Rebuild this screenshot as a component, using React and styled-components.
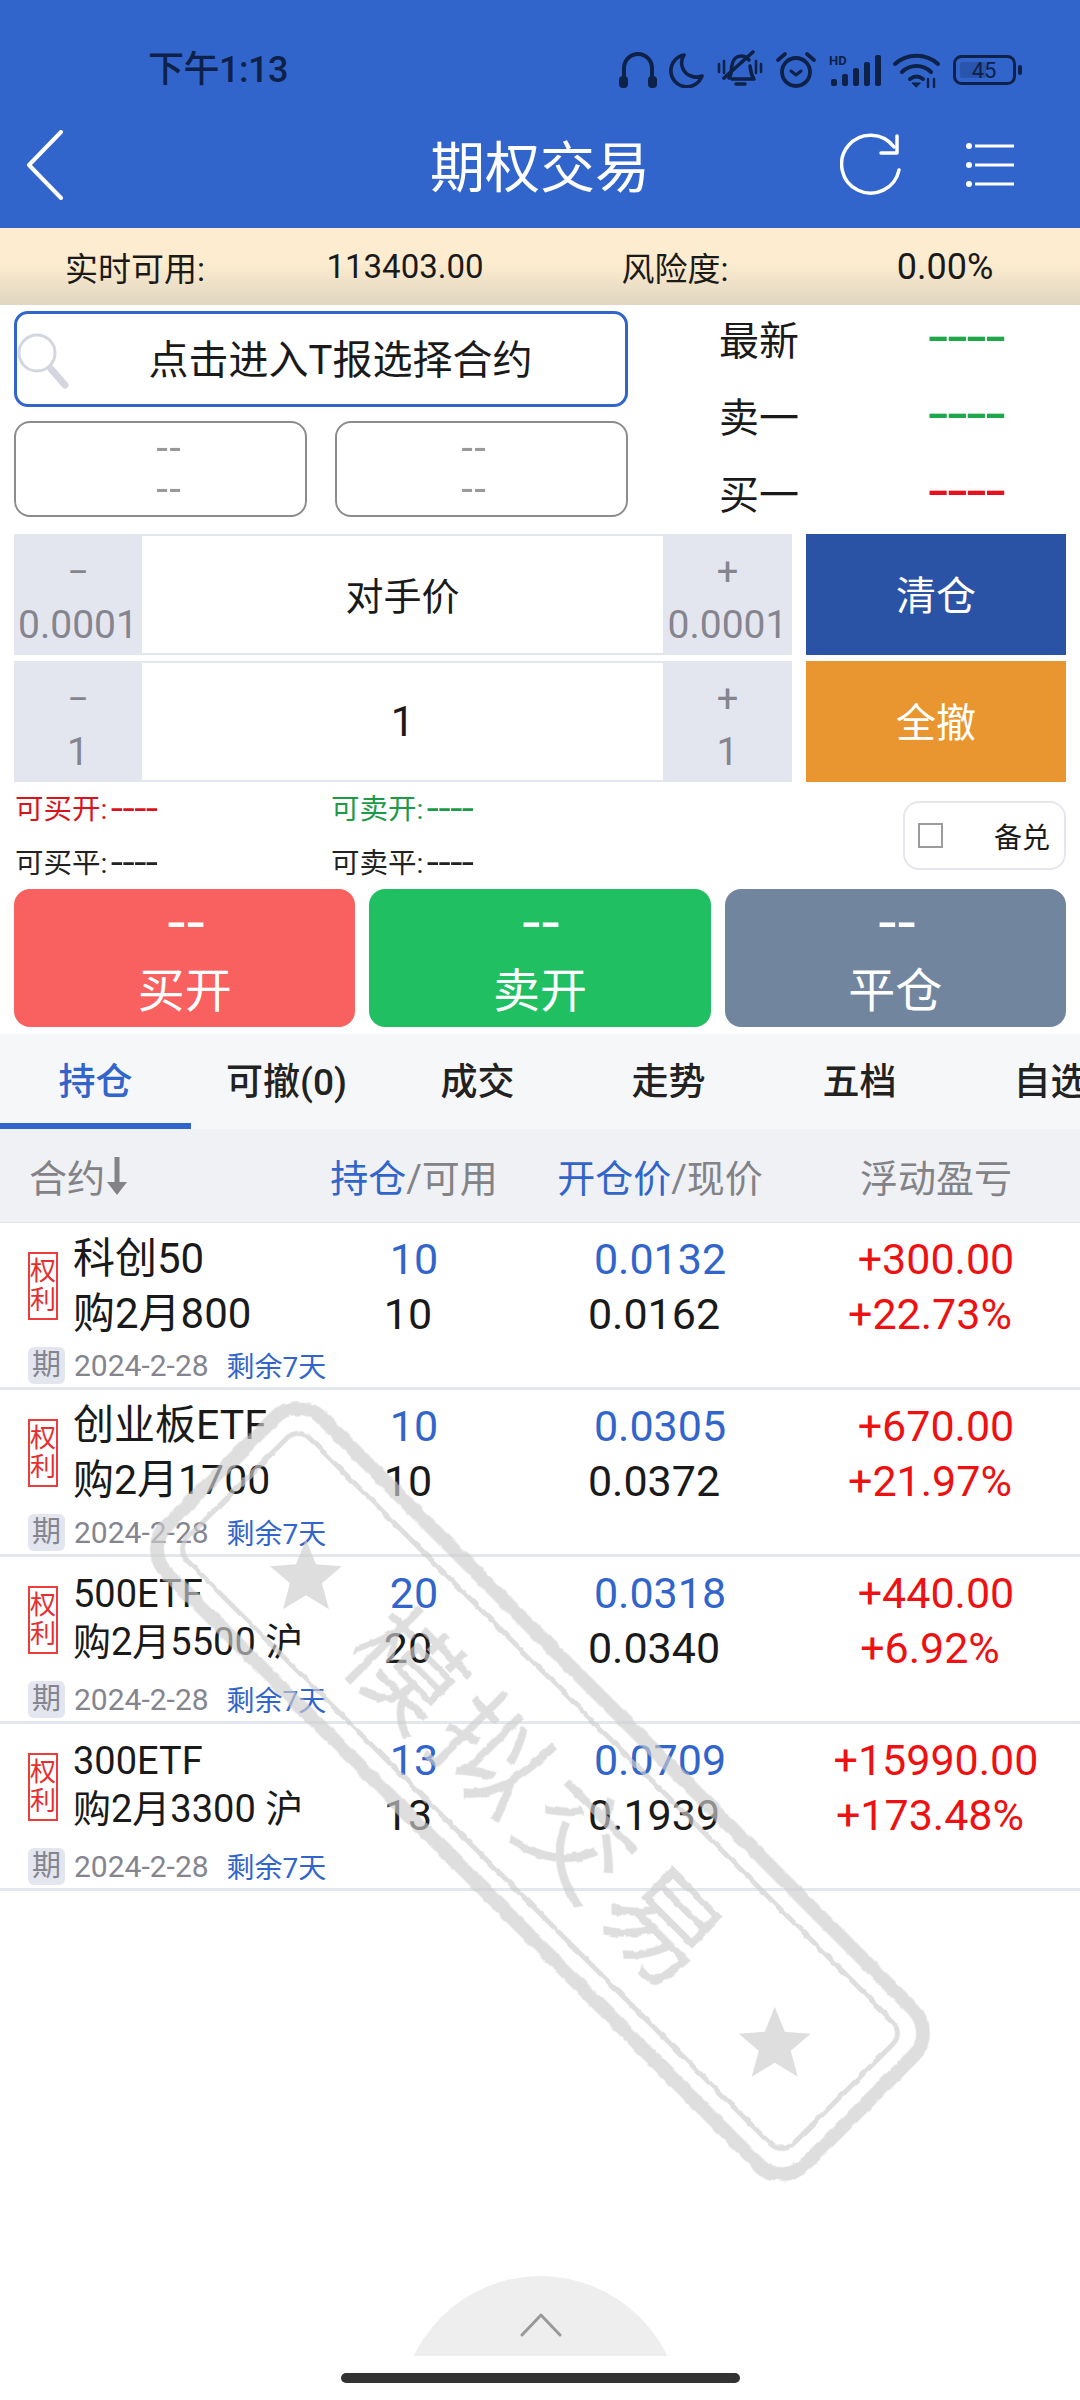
import React from "react";
import styled, { createGlobalStyle } from "styled-components";

const Global = createGlobalStyle`
  html, body { margin: 0; padding: 0; background: #fff; }
  * { box-sizing: border-box; }
  body { font-family: Roboto, "Noto Sans CJK SC", sans-serif; }
`;

const Page = styled.div`
  position: relative;
  width: 1080px;
  height: 2400px;
  display: flex;
  flex-direction: column;
  overflow: hidden;
  background: #fff;
  color: #1a1a1a;
`;

const TopBar = styled.header`
  height: 228px;
  flex: none;
  background: #3265cb;
  display: flex;
  flex-direction: column;
`;
const StatusBar = styled.div`
  height: 110px;
  padding: 50px 57px 0 148px;
  display: flex;
  justify-content: space-between;
  align-items: flex-start;
  color: #0d2149;
`;
const Clock = styled.span`
  font-size: 36px;
  line-height: 40px;
  font-weight: 500;
  letter-spacing: -0.5px;
`;
const StatusIcons = styled.div`
  display: flex;
  align-items: center;
  gap: 12px;
  height: 40px;
  svg { display: block; flex: none; }
`;
const NavBar = styled.div`
  flex: 1;
  position: relative;
  display: flex;
  align-items: center;
  justify-content: space-between;
  padding: 0 66px 8px 26px;
  color: #fff;
`;
const Title = styled.h1`
  position: absolute;
  left: 0;
  right: 0;
  top: 23px;
  margin: 0;
  text-align: center;
  font-size: 55px;
  line-height: 70px;
  font-weight: 400;
`;
const NavRight = styled.div`
  display: flex;
  align-items: center;
  gap: 62px;
`;

const InfoBar = styled.div`
  height: 77px;
  flex: none;
  display: grid;
  grid-template-columns: repeat(4, 1fr);
  align-items: center;
  text-align: center;
  font-size: 33px;
  background: linear-gradient(#fdeccf 0%, #fdeccf 45%, #e0d6c1 100%);
`;
const Percent = styled.span`
  font-size: 36px;
`;

const TradeArea = styled.section`
  padding: 6px 14px 0;
  flex: none;
`;
const TopGrid = styled.div`
  display: flex;
  height: 206px;
`;
const PickColumn = styled.div`
  width: 614px;
  display: flex;
  flex-direction: column;
  gap: 14px;
`;
const SearchBox = styled.div`
  position: relative;
  height: 96px;
  border: 3px solid #3265cb;
  border-radius: 14px;
  display: flex;
  align-items: center;
  justify-content: center;
  padding: 0 0 4px 39px;
  font-size: 40px;
  svg { position: absolute; left: -1px; top: 18px; }
`;
const SubRow = styled.div`
  display: flex;
  justify-content: space-between;
`;
const SubBox = styled.div`
  flex: none;
  width: 293px;
  height: 96px;
  border: 2px solid #8c8c8c;
  border-radius: 16px;
  display: flex;
  flex-direction: column;
  align-items: center;
  justify-content: center;
  gap: 5px;
  line-height: 36px;
  padding-left: ${(p) => p.$pl || 0}px;
  padding-right: ${(p) => p.$pr || 0}px;
`;
const QuoteColumn = styled.div`
  flex: 1;
  display: flex;
  flex-direction: column;
  gap: 23px;
  padding: 0 0 0 91px;
`;
const QuoteRow = styled.div`
  height: 54px;
  display: flex;
  align-items: center;
  font-size: 40px;
`;
const QuoteLabel = styled.span`
  width: 207px;
`;
const DashText = styled.span`
  display: inline-block;
  font-family: Roboto, sans-serif;
  font-size: ${(p) => p.$size}px;
  font-weight: ${(p) => p.$w || 700};
  letter-spacing: ${(p) => p.$ls || 0}px;
  color: ${(p) => p.$c || "inherit"};
  transform: scaleX(${(p) => p.$sx});
  transform-origin: ${(p) => (p.$center ? "center" : "left")};
`;

const StepperGrid = styled.div`
  display: grid;
  grid-template-columns: 778px 260px;
  column-gap: 14px;
  row-gap: 6px;
  margin-top: 17px;
`;
const Stepper = styled.div`
  height: 121px;
  display: grid;
  grid-template-columns: 128px 1fr 129px;
  border-top: 2px solid #e4e6ef;
  border-bottom: 2px solid #e4e6ef;
`;
const StepCell = styled.div`
  background: #e4e6ef;
  color: #85858f;
  display: flex;
  flex-direction: column;
  align-items: center;
  padding-top: 14px;
  font-size: 39px;
  line-height: 46px;
  > b { font-weight: 400; font-size: 38px; line-height: 44px; height: 52px; }
`;
const StepValue = styled.div`
  display: flex;
  align-items: center;
  justify-content: center;
  padding-bottom: ${(p) => p.$pb || 0}px;
  font-size: ${(p) => p.$size}px;
`;
const SideButton = styled.button`
  border: 0;
  height: 121px;
  padding: 0 0 3px;
  background: ${(p) => p.$bg};
  color: #fff;
  font: inherit;
  font-size: 40px;
`;

const AvailRow = styled.div`
  display: flex;
  justify-content: space-between;
  height: 107px;
`;
const AvailGrid = styled.div`
  display: grid;
  grid-template-columns: 316px 316px;
  grid-auto-rows: 54px;
  font-size: 28.5px;
  align-items: center;
  margin-top: -3px;
  padding-left: 1px;
  height: 108px;
`;
const Avail = styled.span`
  color: ${(p) => p.$c};
  white-space: nowrap;
`;
const AvailLabel = styled.span`
  margin-right: 3px;
`;
const CoverBox = styled.div`
  margin-top: 19px;
  width: 163px;
  height: 69px;
  border: 2px solid #e6e7ee;
  border-radius: 16px;
  display: flex;
  align-items: center;
  padding-left: 13px;
  font-size: 28px;
`;
const CheckMark = styled.span`
  width: 25px;
  height: 25px;
  border: 2px solid #9c9c9c;
  margin-right: 51px;
`;
const Actions = styled.div`
  display: grid;
  grid-template-columns: repeat(3, 1fr);
  column-gap: 14px;
`;
const Action = styled.button`
  height: 138px;
  border: 0;
  border-radius: 16px;
  padding: 10px 0 0;
  background: ${(p) => p.$bg};
  color: #fff;
  font: inherit;
  display: flex;
  flex-direction: column;
  align-items: center;
  > b { font-weight: 400; line-height: 50px; height: 60px; }
  > span { font-size: 47px; line-height: 64px; }
`;

const Tabs = styled.nav`
  margin-top: 7px;
  height: 95px;
  flex: none;
  display: flex;
  background: #f6f7f9;
  overflow: hidden;
`;
const Tab = styled.div`
  flex: none;
  width: 191px;
  display: flex;
  align-items: center;
  justify-content: center;
  font-size: 37px;
  font-weight: 500;
  color: ${(p) => (p.$on ? "#3265cb" : "#222")};
  border-bottom: 6px solid ${(p) => (p.$on ? "#3265cb" : "transparent")};
`;
const tableColumns = "280px 268px 224px 308px";
const TableHead = styled.div`
  height: 94px;
  flex: none;
  background: #eff1f4;
  border-bottom: 1px solid #e3e5ec;
  display: grid;
  grid-template-columns: ${tableColumns};
  align-items: center;
  font-size: 38px;
  color: #828287;
  text-align: center;
  white-space: nowrap;
  em { font-style: normal; color: #3265cb; }
`;
const HeadFirst = styled.span`
  display: flex;
  align-items: center;
  padding-left: 29px;
`;
const HeadPnl = styled.span`
  padding-left: 20px;
`;

const Row = styled.div`
  height: 167px;
  flex: none;
  border-bottom: 3px solid #e5e7ee;
  display: grid;
  grid-template-columns: ${tableColumns};
  position: relative;
`;
const NameCell = styled.div`
  display: grid;
  grid-template-columns: 45px minmax(0, 1fr);
  grid-template-rows: 1fr 44px;
  padding-left: 28px;
`;
const RightTag = styled.span`
  margin-top: 29px;
  width: 30px;
  height: 68px;
  border: 2px solid #ee3b3b;
  color: #e62e2e;
  font-size: 26px;
  line-height: 29px;
  text-align: center;
  padding-top: 3px;
`;
const Names = styled.div`
  font-size: ${(p) => p.$size}px;
  line-height: ${(p) => (p.$size < 40 ? 48 : 55)}px;
  padding-top: ${(p) => (p.$size < 40 ? 13 : 8)}px;
  white-space: nowrap;
`;
const Expiry = styled.div`
  grid-column: 1 / 3;
  display: flex;
  align-items: center;
  font-size: 30px;
  color: #85858f;
  white-space: nowrap;
`;
const ExpiryBadge = styled.span`
  flex: none;
  width: 37px;
  height: 37px;
  background: #e4e6ef;
  border-radius: 6px;
  text-align: center;
  font-size: 29px;
  line-height: 36px;
  margin-right: 9px;
`;
const Left = styled.span`
  color: #3265cb;
  font-size: 28px;
  margin-left: 18px;
`;
const Num = styled.div`
  padding-top: 9px;
  padding-left: ${(p) => p.$pl || 0}px;
  display: flex;
  flex-direction: column;
  align-items: center;
  font-size: 43px;
  line-height: 55px;
  color: ${(p) => p.$c || "#1a1a1a"};
  > span:first-child { color: ${(p) => p.$top || "inherit"}; }
  > span:last-child { margin-right: 12px; }
`;

const Bottom = styled.div`
  margin-top: auto;
  height: 124px;
  flex: none;
  display: flex;
  flex-direction: column;
  align-items: center;
`;
const HandleClip = styled.div`
  position: relative;
  width: 253px;
  height: 80px;
  overflow: hidden;
  svg { position: absolute; left: 106px; top: 36px; }
  &::before {
    content: "";
    position: absolute;
    left: -14px;
    top: 0;
    width: 281px;
    height: 281px;
    border-radius: 50%;
    background: #eeeeee;
  }
`;
const HomeBar = styled.div`
  margin-top: 17px;
  width: 399px;
  height: 10px;
  border-radius: 5px;
  background: #333;
`;
const Watermark = styled.svg`
  position: absolute;
  left: 0;
  top: 0;
  pointer-events: none;
`;

const rows = [
  [42, "科创50", "购2月800", "10", "10", "0.0132", "0.0162", "+300.00", "+22.73%"],
  [41, "创业板ETF", "购2月1700", "10", "10", "0.0305", "0.0372", "+670.00", "+21.97%"],
  [38, "500ETF", "购2月5500 沪", "20", "20", "0.0318", "0.0340", "+440.00", "+6.92%"],
  [38, "300ETF", "购2月3300 沪", "13", "13", "0.0709", "0.1939", "+15990.00", "+173.48%"],
];
const tabs = ["持仓", "可撤(0)", "成交", "走势", "五档", "自选"];
const star = "M0 -36 L10 -11 L36 -9 L16 8 L23 34 L0 20 L-23 34 L-16 8 L-36 -9 L-10 -11 Z";

const Stroke = { fill: "none", stroke: "currentColor", strokeLinecap: "round", strokeLinejoin: "round" };

const QuoteDash = ({ c }) => <DashText $size={38} $sx={1.64} $ls={-3.3} $c={c}>----</DashText>;
const AvailDash = () => <DashText $size={29} $sx={1.4} $w={500} $ls={-1.5}>----</DashText>;
const SubDash = () => <DashText $size={28} $sx={1.3} $ls={-1} $c="#999" $center>--</DashText>;
const ActionDash = () => <DashText $size={40} $sx={1.4} $ls={-2} $center>--</DashText>;

export default function App() {
  return (
    <Page>
      <Global />
      <TopBar>
        <StatusBar>
          <Clock>下午1:13</Clock>
          <StatusIcons>
            <svg width="38" height="38" viewBox="0 0 38 38" {...Stroke} strokeWidth="4">
              <path d="M5 30V17a14 14 0 0 1 28 0v13" />
              <rect x="2" y="27" width="5" height="8" rx="2" fill="currentColor" />
              <rect x="31" y="27" width="5" height="8" rx="2" fill="currentColor" />
            </svg>
            <svg width="36" height="36" viewBox="0 0 36 36" {...Stroke} strokeWidth="3.6">
              <path d="M15 3A16 16 0 1 0 33 24A15 15 0 0 1 22 24A14 14 0 0 1 15 3Z" />
            </svg>
            <svg width="46" height="40" viewBox="0 0 46 40" {...Stroke} strokeWidth="3.6">
              <path d="M12 28c3-4 2-8 3-13c1-6 5-9 9-9c3 0 6 1 8 4M33 16c1 5 1 9 4 13l-22 0" />
              <path d="M19 34h9" />
              <path d="M7 28L36 2" />
              <path d="M2 14v8M7 11v12M39 11v12M44 14v8" strokeWidth="2.6" />
            </svg>
            <svg width="42" height="38" viewBox="0 0 42 38" {...Stroke} strokeWidth="3.8">
              <circle cx="21" cy="21" r="14" />
              <path d="M3 9L10 3M39 9L32 3" />
              <path d="M16 20l5 4l5-4" strokeWidth="3" />
            </svg>
            <svg width="52" height="34" viewBox="0 0 52 34">
              <text x="0" y="12" fontSize="13" fontWeight="700" fill="currentColor" fontFamily="Roboto, sans-serif">HD</text>
              <g fill="currentColor">
                <rect x="2" y="26" width="6" height="7" rx="2" />
                <rect x="13" y="21" width="6" height="12" rx="2" />
                <rect x="24" y="15" width="6" height="18" rx="2" />
                <rect x="35" y="9" width="6" height="24" rx="2" />
                <rect x="46" y="2" width="6" height="31" rx="2" />
              </g>
            </svg>
            <svg width="48" height="36" viewBox="0 0 48 36" {...Stroke} strokeWidth="4">
              <path d="M2 12C14 1 33 1 45 12" />
              <path d="M9 20C17 12 30 12 38 20" />
              <path d="M17 27c4-3 9-3 13 0" />
              <path d="M23 35l-4-4h8z" fill="currentColor" strokeWidth="1" />
              <path d="M35 27v8M41 27v8" strokeWidth="2.4" />
            </svg>
            <svg width="70" height="30" viewBox="0 0 70 30">
              <rect x="1.5" y="1.5" width="60" height="27" rx="7" fill="none" stroke="currentColor" strokeWidth="3" />
              <rect x="7" y="7" width="26" height="16" rx="2" fill="#2a55ad" />
              <rect x="65" y="10" width="4" height="10" rx="2" fill="currentColor" />
              <text x="31" y="23" fontSize="22" textAnchor="middle" fill="currentColor" fontFamily="Roboto, sans-serif">45</text>
            </svg>
          </StatusIcons>
        </StatusBar>
        <NavBar>
          <svg width="38" height="70" viewBox="0 0 38 70" fill="none" stroke="#fff" strokeWidth="4" strokeLinecap="round" strokeLinejoin="round">
            <path d="M35 2L3 35L35 68" />
          </svg>
          <Title>期权交易</Title>
          <NavRight>
            <svg width="64" height="64" viewBox="0 0 64 64" fill="none" stroke="#fff" strokeWidth="3.5" strokeLinecap="round" strokeLinejoin="round">
              <path d="M59 37A29 29 0 1 1 54 14" />
              <path d="M57 3V20H41" />
            </svg>
            <svg width="48" height="44" viewBox="0 0 48 44" fill="#fff">
              <circle cx="3" cy="3" r="3" /><rect x="9" y="1.5" width="39" height="3" />
              <circle cx="3" cy="22" r="3" /><rect x="9" y="20.5" width="39" height="3" />
              <circle cx="3" cy="41" r="3" /><rect x="9" y="39.5" width="39" height="3" />
            </svg>
          </NavRight>
        </NavBar>
      </TopBar>

      <InfoBar>
        <span>实时可用:</span>
        <span>113403.00</span>
        <span>风险度:</span>
        <Percent>0.00%</Percent>
      </InfoBar>

      <TradeArea>
        <TopGrid>
          <PickColumn>
            <SearchBox>
              <svg width="56" height="58" viewBox="0 0 56 58" fill="none" stroke="#d3d6de">
                <circle cx="21" cy="21" r="18" strokeWidth="3" />
                <path d="M35 37L49 53" strokeWidth="7" strokeLinecap="round" />
              </svg>
              点击进入T报选择合约
            </SearchBox>
            <SubRow>
              <SubBox $pl={16}><SubDash /><SubDash /></SubBox>
              <SubBox $pr={16}><SubDash /><SubDash /></SubBox>
            </SubRow>
          </PickColumn>
          <QuoteColumn>
            <QuoteRow><QuoteLabel>最新</QuoteLabel><QuoteDash c="#1fa84a" /></QuoteRow>
            <QuoteRow><QuoteLabel>卖一</QuoteLabel><QuoteDash c="#1fa84a" /></QuoteRow>
            <QuoteRow><QuoteLabel>买一</QuoteLabel><QuoteDash c="#e8101c" /></QuoteRow>
          </QuoteColumn>
        </TopGrid>

        <StepperGrid>
          <Stepper>
            <StepCell><b>−</b>0.0001</StepCell>
            <StepValue $size={38} $pb={3}>对手价</StepValue>
            <StepCell><b>+</b>0.0001</StepCell>
          </Stepper>
          <SideButton $bg="#2a52a5">清仓</SideButton>
          <Stepper>
            <StepCell><b>−</b>1</StepCell>
            <StepValue $size={42}>1</StepValue>
            <StepCell><b>+</b>1</StepCell>
          </Stepper>
          <SideButton $bg="#e99631">全撤</SideButton>
        </StepperGrid>

        <AvailRow>
          <AvailGrid>
            <Avail $c="#d9141c"><AvailLabel>可买开:</AvailLabel><AvailDash /></Avail>
            <Avail $c="#1c9a45"><AvailLabel>可卖开:</AvailLabel><AvailDash /></Avail>
            <Avail $c="#222"><AvailLabel>可买平:</AvailLabel><AvailDash /></Avail>
            <Avail $c="#222"><AvailLabel>可卖平:</AvailLabel><AvailDash /></Avail>
          </AvailGrid>
          <CoverBox><CheckMark />备兑</CoverBox>
        </AvailRow>

        <Actions>
          <Action $bg="#f96060"><b><ActionDash /></b><span>买开</span></Action>
          <Action $bg="#20c062"><b><ActionDash /></b><span>卖开</span></Action>
          <Action $bg="#71869e"><b><ActionDash /></b><span>平仓</span></Action>
        </Actions>
      </TradeArea>

      <Tabs>
        {tabs.map((t, i) => <Tab key={t} $on={i === 0}>{t}</Tab>)}
      </Tabs>
      <TableHead>
        <HeadFirst>
          合约
          <svg width="24" height="38" viewBox="0 0 24 38" fill="#828287">
            <rect x="9.5" y="0" width="5" height="28" />
            <path d="M2 25H22L12 38Z" />
          </svg>
        </HeadFirst>
        <span><em>持仓</em>/可用</span>
        <span><em>开仓价</em>/现价</span>
        <HeadPnl>浮动盈亏</HeadPnl>
      </TableHead>
      {rows.map((r) => (
        <Row key={r[1]}>
          <NameCell>
            <RightTag>权利</RightTag>
            <Names $size={r[0]}>{r[1]}<br />{r[2]}</Names>
            <Expiry>
              <ExpiryBadge>期</ExpiryBadge>2024-2-28<Left>剩余7天</Left>
            </Expiry>
          </NameCell>
          <Num $top="#3265cb"><span>{r[3]}</span><span>{r[4]}</span></Num>
          <Num $top="#3265cb"><span>{r[5]}</span><span>{r[6]}</span></Num>
          <Num $c="#ee1111" $pl={20}><span>{r[7]}</span><span>{r[8]}</span></Num>
        </Row>
      ))}

      <Bottom>
        <HandleClip>
          <svg width="42" height="26" viewBox="0 0 42 26" fill="none" stroke="#999" strokeWidth="3" strokeLinecap="round" strokeLinejoin="round">
            <path d="M2 23L21 3L40 23" />
          </svg>
        </HandleClip>
        <HomeBar />
      </Bottom>

      <Watermark width="1080" height="2400" viewBox="0 0 1080 2400">
        <defs>
          <filter id="rough" x="-5%" y="-5%" width="110%" height="110%">
            <feTurbulence type="fractalNoise" baseFrequency="0.09" numOctaves="2" seed="7" result="n" />
            <feDisplacementMap in="SourceGraphic" in2="n" scale="4" />
          </filter>
        </defs>
        <g transform="rotate(45 540 1791)" fill="#cecece" opacity="0.66">
          <g filter="url(#rough)">
            <rect x="88.5" y="1681.5" width="903" height="219" rx="33" fill="none" stroke="#cecece" strokeWidth="14" />
            <rect x="111.5" y="1704.5" width="857" height="173" rx="16" fill="none" stroke="#cecece" strokeWidth="5" />
            <text x="545" y="1841" textAnchor="middle" fontSize="112" letterSpacing="9" fontFamily="'Noto Sans CJK SC', sans-serif">模拟交易</text>
          </g>
          <path d={star} transform="translate(222 1804) rotate(-45)" />
          <path d={star} transform="translate(884 1803) rotate(-45)" />
        </g>
      </Watermark>
    </Page>
  );
}
